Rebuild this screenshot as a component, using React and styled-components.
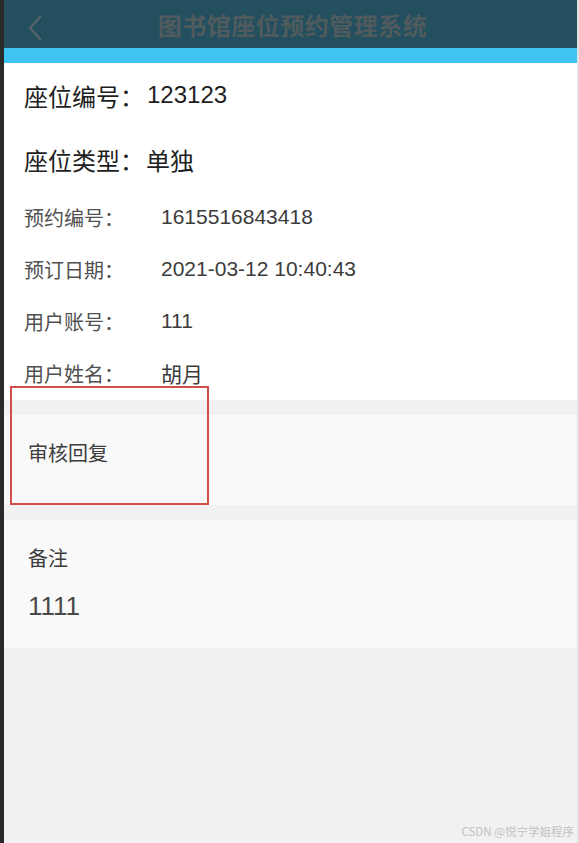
import React from 'react';
import styled, { createGlobalStyle } from 'styled-components';

const GlobalStyle = createGlobalStyle`
  html, body {
    margin: 0;
    padding: 0;
    background: #f1f1f1;
  }
  body {
    font-family: "Liberation Sans", "Noto Sans CJK SC", sans-serif;
  }
`;

const Page = styled.div`
  position: relative;
  width: 579px;
  height: 843px;
  box-sizing: border-box;
  border-left: 4px solid #2a2a2a;
  border-right: 2px solid #e2e2e2;
  background: #f1f1f1;
  overflow: hidden;
`;

const Header = styled.header`
  position: relative;
  height: 48px;
  background: #244f5e;
  display: flex;
  align-items: center;
  justify-content: center;
`;

const Back = styled.div`
  position: absolute;
  left: 20px;
  top: 14px;
  width: 24px;
  height: 28px;
`;

const Title = styled.h1`
  margin: 0;
  font-family: "Noto Sans CJK SC", sans-serif;
  font-size: 24px;
  font-weight: 700;
  color: #505b5e;
  letter-spacing: 0.5px;
  padding-left: 4px;
`;

const AccentBar = styled.div`
  height: 15px;
  background: #3ec3f2;
`;

const InfoPanel = styled.section`
  background: #ffffff;
  padding-bottom: 1px;
`;

const Row = styled.div`
  display: flex;
  align-items: center;
  height: ${({ $big }) => ($big ? '64px' : '52px')};
  padding-left: 20px;
  font-size: ${({ $big }) => ($big ? '24px' : '20px')};
  color: ${({ $big }) => ($big ? '#1e1e1e' : '#505050')};
`;

const Label = styled.span`
  font-family: "Noto Sans CJK SC", sans-serif;
  width: ${({ $w }) => $w || 'auto'};
  margin-right: ${({ $gap }) => $gap || '0'};
`;

const Value = styled.span`
  font-family: "Liberation Sans", "Noto Sans CJK SC", sans-serif;
  font-size: ${({ $size }) => $size || 'inherit'};
  color: ${({ $dark }) => ($dark ? '#1e1e1e' : '#3c3c3c')};
`;

const Section = styled.section`
  margin-top: 15px;
  background: #f9f9f9;
  height: ${({ $h }) => $h};
  box-sizing: border-box;
  padding: ${({ $pad }) => $pad} 0 0 24px;
  display: flex;
  flex-direction: column;
`;

const SectionTitle = styled.div`
  font-family: "Noto Sans CJK SC", sans-serif;
  font-size: 20px;
  line-height: 24px;
  color: #3c3c3c;
`;

const SectionText = styled.div`
  margin-top: 24px;
  font-size: 26px;
  line-height: 24px;
  color: #4a4a4a;
`;

const Highlight = styled.div`
  position: absolute;
  left: 6px;
  top: 386px;
  width: 199px;
  height: 119px;
  box-sizing: border-box;
  border: 2px solid #cf5048;
  pointer-events: none;
`;

const Watermark = styled.div`
  position: absolute;
  right: 3px;
  bottom: 4px;
  font-family: "Noto Sans CJK SC", sans-serif;
  font-size: 11.5px;
  color: #c2c2c2;
`;

const info = [
  ['预约编号：', '1615516843418'],
  ['预订日期：', '2021-03-12 10:40:43'],
  ['用户账号：', '111'],
  ['用户姓名：', '胡月'],
];

export default function App() {
  return (
    <>
      <GlobalStyle />
      <Page>
        <Header>
          <Back>
            <svg width="24" height="28" viewBox="0 0 24 28">
              <polyline points="17,2 6,14 17,26" fill="none" stroke="#55656a" strokeWidth="2.2" />
            </svg>
          </Back>
          <Title>图书馆座位预约管理系统</Title>
        </Header>
        <AccentBar />
        <InfoPanel>
          <Row $big>
            <Label $gap="3px">座位编号：</Label>
            <Value $dark>123123</Value>
          </Row>
          <Row $big>
            <Label $gap="2px">座位类型：</Label>
            <Label>单独</Label>
          </Row>
          {info.map(([k, v]) => (
            <Row key={k}>
              <Label $w="137px">{k}</Label>
              <Value $size="21px">{v}</Value>
            </Row>
          ))}
        </InfoPanel>
        <Section $h="90px" $pad="26px">
          <SectionTitle>审核回复</SectionTitle>
        </Section>
        <Section $h="128px" $pad="26px">
          <SectionTitle>备注</SectionTitle>
          <SectionText>1111</SectionText>
        </Section>
        <Highlight />
        <Watermark>CSDN @悦宁学姐程序</Watermark>
      </Page>
    </>
  );
}
